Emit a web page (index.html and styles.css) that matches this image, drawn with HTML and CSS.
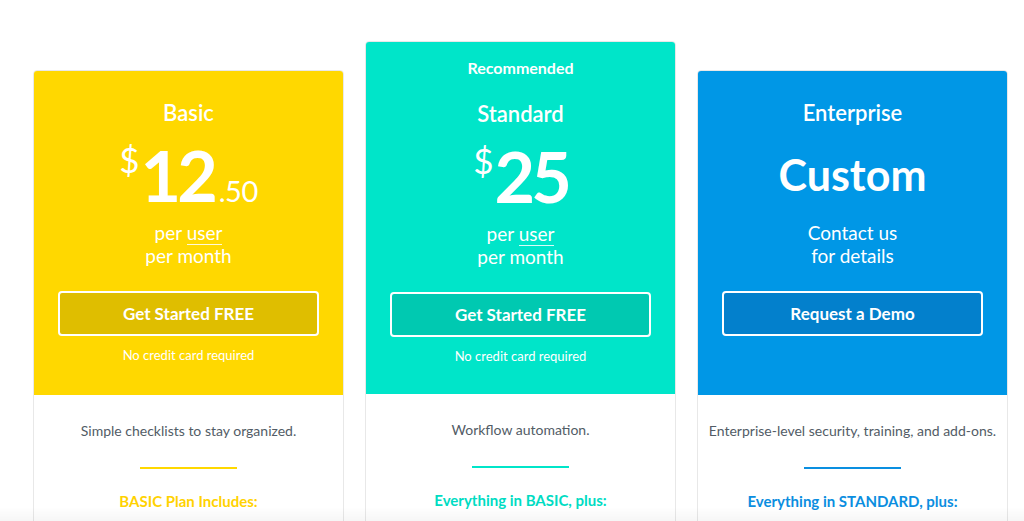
FILE: index.html
```html
<!DOCTYPE html>
<html lang="en">
<head>
<meta charset="utf-8">
<title>Pricing</title>
<link rel="stylesheet" href="styles.css">
</head>
<body>
<main class="plans">
  <section class="card basic">
    <div class="head">
      <h2 class="title">Basic</h2>
      <div class="price"><span class="cur">$</span><span class="num">12</span><span class="cents">.50</span></div>
      <p class="per">per <span class="u">user</span><br>per month</p>
      <a class="btn" href="#">Get Started FREE</a>
      <p class="note">No credit card required</p>
    </div>
    <div class="body">
      <p class="desc">Simple checklists to stay organized.</p>
      <hr class="rule">
      <h3 class="inc">BASIC Plan Includes:</h3>
    </div>
  </section>

  <section class="card standard featured">
    <div class="ribbon">Recommended</div>
    <div class="head">
      <h2 class="title">Standard</h2>
      <div class="price"><span class="cur">$</span><span class="num">25</span></div>
      <p class="per">per <span class="u">user</span><br>per month</p>
      <a class="btn" href="#">Get Started FREE</a>
      <p class="note">No credit card required</p>
    </div>
    <div class="body">
      <p class="desc">Workflow automation.</p>
      <hr class="rule">
      <h3 class="inc">Everything in BASIC, plus:</h3>
    </div>
  </section>

  <section class="card enterprise">
    <div class="head">
      <h2 class="title">Enterprise</h2>
      <div class="price custom">Custom</div>
      <p class="per">Contact us<br>for details</p>
      <a class="btn" href="#">Request a Demo</a>
    </div>
    <div class="body">
      <p class="desc">Enterprise-level security, training, and add-ons.</p>
      <hr class="rule">
      <h3 class="inc">Everything in STANDARD, plus:</h3>
    </div>
  </section>
</main>
</body>
</html>
```

FILE: styles.css
```css
* { box-sizing: border-box; }

html, body {
  margin: 0;
  padding: 0;
  background: #ffffff;
  font-family: "Lato", "Open Sans", "Liberation Sans", sans-serif;
  color: #ffffff;
  overflow: hidden;
}

body::after {
  content: "";
  position: fixed;
  left: 0;
  right: 0;
  bottom: 0;
  height: 14px;
  background: linear-gradient(to bottom, rgba(0,0,0,0), rgba(0,0,0,0.035));
  pointer-events: none;
}

.plans {
  display: flex;
  align-items: flex-start;
  gap: 21px;
  padding: 41px 16px 0 33px;
}

.card {
  width: 311px;
  flex: 0 0 311px;
  margin-top: 29px;
  border: 1px solid #e8e8e8;
  border-radius: 4px;
  overflow: hidden;
  background: #ffffff;
  text-align: center;
}

.card.featured { margin-top: 0; }

.ribbon {
  padding-top: 15px;
  line-height: 22px;
  font-size: 16px;
  font-weight: 700;
}

.head {
  min-height: 324px;
  padding: 28px 24px 0;
}

.featured .head {
  padding-top: 21px;
  min-height: 315px;
}

.basic .ribbon, .basic .head { background: #ffd800; }
.standard .ribbon, .standard .head { background: #00e5c9; }
.enterprise .head { background: #0097e6; }

.title {
  margin: 0;
  font-size: 22px;
  line-height: 28px;
  font-weight: 600;
}

.price {
  margin-top: 8px;
  height: 80px;
  line-height: 80px;
  font-size: 70px;
  font-weight: 700;
  letter-spacing: -4px;
}

.price .cur {
  font-size: 35px;
  font-weight: 400;
  letter-spacing: 0;
  vertical-align: top;
  position: relative;
  top: -16px;
  margin-right: 1px;
}

.price .cents {
  font-size: 29px;
  font-weight: 400;
  letter-spacing: -0.5px;
  margin-left: 5px;
}

.price.custom {
  font-size: 43px;
  letter-spacing: 0;
}

.per {
  margin: 6px 0 0;
  font-size: 19px;
  line-height: 23px;
}

.per .u {
  border-bottom: 1px solid rgba(255,255,255,0.85);
  padding-bottom: 0;
}

.btn {
  display: block;
  margin: 24px 0 0;
  height: 45px;
  line-height: 41px;
  border: 2px solid #ffffff;
  border-radius: 4px;
  color: #ffffff;
  text-decoration: none;
  font-size: 17px;
  font-weight: 700;
}

.basic .btn { background: #dfbe00; }
.standard .btn { background: #00c9b1; }
.enterprise .btn { background: #0380cc; }

.note {
  margin: 11px 0 0;
  font-size: 13px;
  line-height: 16px;
}

.body {
  padding: 26px 4px 24px;
  color: #525c66;
}

.desc {
  margin: 0;
  font-size: 14px;
  line-height: 20px;
  white-space: nowrap;
}

.rule {
  width: 97px;
  height: 2px;
  margin: 26px auto 0;
  border: 0;
}

.basic .rule { background: #ffd800; }
.standard .rule { background: #00e5c9; }
.enterprise .rule { background: #0a8fe0; }

.inc {
  margin: 22px 0 0;
  font-size: 15px;
  line-height: 20px;
  font-weight: 700;
}

.basic .inc { color: #ffd200; }
.standard .inc { color: #00dcc3; }
.enterprise .inc { color: #0b8ee0; }
```
